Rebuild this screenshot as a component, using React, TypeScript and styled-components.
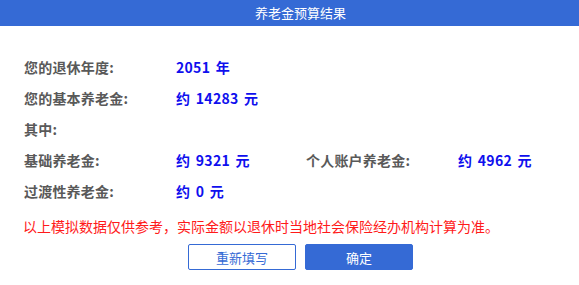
import React from "react";
import styled, { createGlobalStyle } from "styled-components";

const GlobalStyle = createGlobalStyle`
  html, body {
    margin: 0;
    padding: 0;
    background: #fff;
    overflow: hidden;
  }
  body {
    font-family: "Noto Sans CJK SC", "Noto Sans", sans-serif;
  }
`;

const BLUE = "#356ad5";

const Dialog = styled.div`
  width: 601px;
  background: #fff;
`;

const Header = styled.div`
  height: 26px;
  background: ${BLUE};
  color: #fff;
  font-size: 13px;
  line-height: 26px;
  text-align: center;
`;

const Body = styled.div`
  padding: 25px 0 0 23px;
`;

const Grid = styled.div`
  display: grid;
  grid-template-columns: 153px 129px 153px auto;
  grid-auto-rows: 31px;
  align-items: center;
`;

const Label = styled.div`
  font-size: 14px;
  font-weight: bold;
  color: #595959;
  padding-left: 1px;
  letter-spacing: 0.2px;
`;

const Value = styled.div`
  font-size: 14px;
  font-weight: bold;
  color: #0f0fee;
  word-spacing: 2px;
  letter-spacing: 0.3px;
`;

const Note = styled.p`
  margin: 10px 0 0;
  font-size: 14px;
  line-height: 20px;
  color: #ff1a1a;
`;

const Actions = styled.div`
  display: flex;
  justify-content: center;
  gap: 9px;
  margin: 8px 0 0 -23px;
`;

const Button = styled.button<{ $primary?: boolean }>`
  width: 108px;
  height: 26px;
  padding: 0;
  border: 1px solid ${BLUE};
  border-radius: 2px;
  background: ${({ $primary }) => ($primary ? BLUE : "#fff")};
  color: ${({ $primary }) => ($primary ? "#fff" : BLUE)};
  font-family: inherit;
  font-size: 13px;
  cursor: pointer;
`;

const rows: [string, string, string?, string?][] = [
  ["您的退休年度:", "2051 年"],
  ["您的基本养老金:", "约 14283 元"],
  ["其中:", ""],
  ["基础养老金:", "约 9321 元", "个人账户养老金:", "约 4962 元"],
  ["过渡性养老金:", "约 0 元"],
];

export default function App() {
  return (
    <>
      <GlobalStyle />
      <Dialog>
        <Header>养老金预算结果</Header>
        <Body>
          <Grid>
            {rows.map(([l1, v1, l2, v2]) => (
              <React.Fragment key={l1}>
                <Label>{l1}</Label>
                <Value>{v1}</Value>
                <Label>{l2 ?? ""}</Label>
                <Value>{v2 ?? ""}</Value>
              </React.Fragment>
            ))}
          </Grid>
          <Note>以上模拟数据仅供参考，实际金额以退休时当地社会保险经办机构计算为准。</Note>
          <Actions>
            <Button>重新填写</Button>
            <Button $primary>确定</Button>
          </Actions>
        </Body>
      </Dialog>
    </>
  );
}
